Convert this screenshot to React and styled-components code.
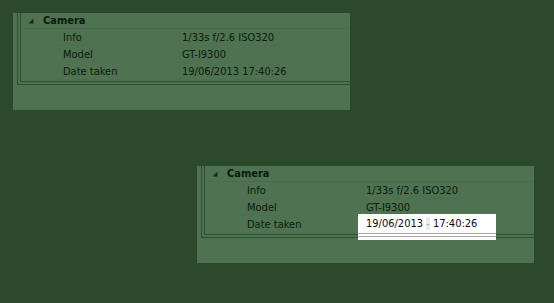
import React from 'react';
import styled, { createGlobalStyle } from 'styled-components';

const GlobalStyle = createGlobalStyle`
  html, body {
    margin: 0;
    padding: 0;
    background: #2b4a2c;
  }
  body {
    font-family: "DejaVu Sans Condensed", "DejaVu Sans", sans-serif;
    font-stretch: condensed;
  }
`;

const Stage = styled.div`
  width: 554px;
  height: 303px;
  padding-top: 13px;
  box-sizing: border-box;
  display: flex;
  flex-direction: column;
`;

const Panel = styled.div`
  position: relative;
  width: 337px;
  height: 97px;
  margin-left: ${(p) => p.left}px;
  margin-top: ${(p) => p.top || 0}px;
  padding-left: 4px;
  box-sizing: border-box;
  background: #4f7250;
`;

const Frame = styled.div`
  border-left: 1px solid #2e4e30;
  border-bottom: 1px solid #2e4e30;
  padding-left: 2px;
  padding-bottom: 2px;
`;

const Grid = styled.div`
  border-left: 1px solid #2e4e30;
  border-bottom: 1px solid #2e4e30;
  height: 68px;
  display: flex;
  flex-direction: column;
`;

const Row = styled.div`
  display: flex;
  align-items: center;
  height: ${(p) => (p.header ? 16 : 17)}px;
  box-sizing: border-box;
  border-bottom: 1px solid ${(p) => (p.header ? '#4a6c4b' : '#4d704e')};
  font-size: 11px;
  color: #0c1a0d;
  white-space: nowrap;
`;

const Toggle = styled.svg`
  width: 6px;
  height: 6px;
  margin-left: 7px;
  margin-right: 9px;
  flex: none;
`;

const GroupName = styled.span`
  font-weight: bold;
`;

const Label = styled.span`
  width: 119px;
  padding-left: 42px;
  flex: none;
`;

const Value = styled.span``;

const Editor = styled.div`
  position: absolute;
  left: 161px;
  top: 48px;
  width: 138px;
  height: 26px;
  box-sizing: border-box;
  padding: 3px 0 0 8px;
  background:
    linear-gradient(#a4a8a4, #a4a8a4) 0 19px / 100% 1px no-repeat,
    linear-gradient(#a4a8a4, #a4a8a4) 0 22px / 100% 1px no-repeat,
    #ffffff;
  font-size: 11px;
  color: #0a0a14;
  white-space: nowrap;
`;

const Sep = styled.span`
  color: #a8a8a8;
  background: #ececec;
`;

const rows = [
  ['Info', '1/33s f/2.6 ISO320'],
  ['Model', 'GT-I9300'],
  ['Date taken', '19/06/2013 17:40:26'],
];

const Properties = ({ left, top, editing }) => (
  <Panel left={left} top={top}>
    <Frame>
      <Grid>
        <Row header>
          <Toggle viewBox="0 0 6 6">
            <polygon points="5.5,0.5 5.5,5.5 0.5,5.5" fill="#16281a" />
          </Toggle>
          <GroupName>Camera</GroupName>
        </Row>
        {rows.map(([label, value]) => (
          <Row key={label}>
            <Label>{label}</Label>
            <Value>{editing && label === 'Date taken' ? '' : value}</Value>
          </Row>
        ))}
      </Grid>
    </Frame>
    {editing && (
      <Editor>
        19/06/2013 <Sep>-</Sep> 17:40:26
      </Editor>
    )}
  </Panel>
);

export default function App() {
  return (
    <>
      <GlobalStyle />
      <Stage>
        <Properties left={13} />
        <Properties left={197} top={56} editing />
      </Stage>
    </>
  );
}
